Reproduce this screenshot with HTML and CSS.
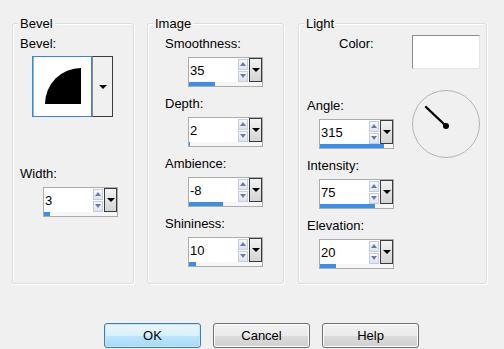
FILE: index.html
```html
<!DOCTYPE html>
<html>
<head>
<meta charset="utf-8">
<link rel="stylesheet" href="styles.css">
</head>
<body>
<div class="dialog">
  <div class="groups">
    <div class="group g-bevel">
      <span class="legend">Bevel</span>
      <div class="label">Bevel:</div>
      <div class="bevel-pick">
        <div class="bevel-preview">
          <svg width="58" height="59" viewBox="0 0 58 59"><path d="M48 47 L12 47 A36 36 0 0 1 48 11 Z" fill="#000"/></svg>
        </div>
        <div class="bevel-drop"><span class="tri"></span></div>
      </div>
      <div class="label width-label">Width:</div>
      <div class="spin">
        <div class="spin-main">
          <div class="spin-field"><span class="val">3</span><span class="arrows"><span class="arrow up"></span><span class="arrow down"></span></span></div>
          <div class="drop"><span class="tri"></span></div>
        </div>
        <div class="bar"><span class="fill" style="width:8%"></span></div>
      </div>
    </div>

    <div class="group g-image">
      <span class="legend">Image</span>
      <div class="param">
        <div class="label">Smoothness:</div>
        <div class="spin">
          <div class="spin-main">
            <div class="spin-field"><span class="val">35</span><span class="arrows"><span class="arrow up"></span><span class="arrow down"></span></span></div>
            <div class="drop"><span class="tri"></span></div>
          </div>
          <div class="bar"><span class="fill" style="width:35%"></span></div>
        </div>
      </div>
      <div class="param">
        <div class="label">Depth:</div>
        <div class="spin">
          <div class="spin-main">
            <div class="spin-field"><span class="val">2</span><span class="arrows"><span class="arrow up"></span><span class="arrow down"></span></span></div>
            <div class="drop"><span class="tri"></span></div>
          </div>
          <div class="bar"><span class="fill" style="width:2%"></span></div>
        </div>
      </div>
      <div class="param">
        <div class="label">Ambience:</div>
        <div class="spin">
          <div class="spin-main">
            <div class="spin-field"><span class="val">-8</span><span class="arrows"><span class="arrow up"></span><span class="arrow down"></span></span></div>
            <div class="drop"><span class="tri"></span></div>
          </div>
          <div class="bar"><span class="fill" style="width:46%"></span></div>
        </div>
      </div>
      <div class="param">
        <div class="label">Shininess:</div>
        <div class="spin">
          <div class="spin-main">
            <div class="spin-field"><span class="val">10</span><span class="arrows"><span class="arrow up"></span><span class="arrow down"></span></span></div>
            <div class="drop"><span class="tri"></span></div>
          </div>
          <div class="bar"><span class="fill" style="width:10%"></span></div>
        </div>
      </div>
    </div>

    <div class="group g-light">
      <span class="legend">Light</span>
      <div class="color-row">
        <div class="label color-label">Color:</div>
        <div class="swatch"></div>
      </div>
      <div class="lower">
        <div class="col">
          <div class="param">
            <div class="label">Angle:</div>
            <div class="spin">
              <div class="spin-main">
                <div class="spin-field"><span class="val">315</span><span class="arrows"><span class="arrow up"></span><span class="arrow down"></span></span></div>
                <div class="drop"><span class="tri"></span></div>
              </div>
              <div class="bar"><span class="fill" style="width:88%"></span></div>
            </div>
          </div>
          <div class="param">
            <div class="label">Intensity:</div>
            <div class="spin">
              <div class="spin-main">
                <div class="spin-field"><span class="val">75</span><span class="arrows"><span class="arrow up"></span><span class="arrow down"></span></span></div>
                <div class="drop"><span class="tri"></span></div>
              </div>
              <div class="bar"><span class="fill" style="width:76%"></span></div>
            </div>
          </div>
          <div class="param">
            <div class="label">Elevation:</div>
            <div class="spin">
              <div class="spin-main">
                <div class="spin-field"><span class="val">20</span><span class="arrows"><span class="arrow up"></span><span class="arrow down"></span></span></div>
                <div class="drop"><span class="tri"></span></div>
              </div>
              <div class="bar"><span class="fill" style="width:22%"></span></div>
            </div>
          </div>
        </div>
        <svg class="dial" width="70" height="70" viewBox="0 0 70 70">
          <circle cx="35" cy="35" r="33.5" fill="none" stroke="#b4b4b4" stroke-width="1"/>
          <line x1="15" y1="18" x2="35" y2="37" stroke="#000" stroke-width="2.4" stroke-linecap="round"/>
          <circle cx="35" cy="37" r="3" fill="#000"/>
        </svg>
      </div>
    </div>
  </div>

  <div class="buttons">
    <button class="btn btn-default">OK</button>
    <button class="btn">Cancel</button>
    <button class="btn">Help</button>
  </div>
</div>
</body>
</html>
```

FILE: styles.css
```css
* { box-sizing: border-box; }

html, body {
  margin: 0;
  padding: 0;
}

body {
  width: 504px;
  height: 349px;
  overflow: hidden;
  background: #f0f0f0;
  color: #000;
  font: 13px/15px "Liberation Sans", Arial, sans-serif;
}

.dialog {
  padding: 23px 0 0 12px;
}

.groups {
  display: flex;
  align-items: flex-start;
}

.group {
  position: relative;
  height: 261px;
  border: 1px solid #d5dfe5;
  border-radius: 3px;
  box-shadow: inset 1px 1px 0 #fff, 1px 1px 0 #fff;
  padding-top: 12px;
}

.legend {
  position: absolute;
  top: -8px;
  left: 5px;
  padding: 0 2px;
  background: #f0f0f0;
}

.g-bevel {
  width: 122px;
  padding-left: 7px;
}

.g-image {
  width: 137px;
  margin-left: 13px;
  padding-left: 17px;
}

.g-light {
  width: 189px;
  margin-left: 14px;
  padding-left: 8px;
}

/* Bevel picker */
.bevel-pick {
  display: flex;
  margin: 5px 0 0 12px;
  height: 61px;
}

.bevel-preview {
  width: 60px;
  height: 61px;
  background: #fff;
  border: 1px solid #3a86d6;
  box-shadow: inset 1px 0 0 #8dbbec;
}

.bevel-preview svg {
  display: block;
}

.bevel-drop {
  width: 21px;
  height: 61px;
  border: 1px solid #3c3c3c;
  border-left-color: #8a8a8a;
  background: #f0f0f0;
  display: flex;
  align-items: center;
  justify-content: center;
}

.width-label {
  margin-top: 49px;
}

.g-bevel .spin {
  margin: 6px 0 0 23px;
}

/* parameters */
.param {
  margin-bottom: 9px;
}

.g-image .param .spin {
  margin: 6px 0 0 23px;
}

.g-light .param .spin {
  margin: 6px 0 0 12px;
}

/* spin control */
.spin {
  width: 75px;
  height: 30px;
  border: 1px solid #acacac;
  background: #f4f4f4;
  display: flex;
  flex-direction: column;
}

.spin-main {
  display: flex;
  height: 24px;
}

.spin-field {
  flex: 1;
  background: #fff;
  display: flex;
  align-items: center;
  padding-left: 1px;
}

.val {
  flex: 1;
  padding-top: 1px;
}

.arrows {
  display: flex;
  flex-direction: column;
  gap: 1px;
  margin-right: 1px;
}

.arrow {
  width: 10px;
  height: 11px;
  border: 1px solid #c3cbdc;
  background: linear-gradient(#f6f8fc, #dde4f0);
  display: flex;
  align-items: center;
  justify-content: center;
}

.arrow::after {
  content: "";
  width: 0;
  height: 0;
  border-left: 3px solid transparent;
  border-right: 3px solid transparent;
}

.arrow.up::after {
  border-bottom: 4px solid #6d7aa6;
}

.arrow.down::after {
  border-top: 4px solid #6d7aa6;
}

.drop {
  width: 13px;
  border: 1px solid #3a3a3a;
  background: linear-gradient(to bottom, #f2f2f2, #d4d4d4);
  display: flex;
  align-items: center;
  justify-content: center;
}

.tri {
  width: 0;
  height: 0;
  border-left: 4px solid transparent;
  border-right: 4px solid transparent;
  border-top: 4px solid #000;
}

.bar {
  flex: 1;
  background: #f6f6f6;
  display: flex;
}

.fill {
  display: block;
  height: 4px;
  background: #3b8fe6;
}

/* Light group */
.color-row {
  display: flex;
  align-items: flex-start;
}

.color-label {
  margin-left: 32px;
  width: 73px;
}

.swatch {
  width: 68px;
  height: 34px;
  margin-top: -1px;
  background: #fff;
  border-top: 1px solid #8c8c8c;
  border-left: 1px solid #8c8c8c;
  border-right: 1px solid #e4e4e4;
  border-bottom: 1px solid #e4e4e4;
}

.lower {
  display: flex;
  align-items: flex-start;
  margin-top: 29px;
}

.col {
  width: 87px;
}

.dial {
  display: block;
  margin: -9px 0 0 17px;
}

/* buttons */
.buttons {
  display: flex;
  gap: 12px;
  margin: 39px 0 0 92px;
}

.btn {
  width: 97px;
  height: 25px;
  padding: 0;
  border: 1px solid #707070;
  border-radius: 3px;
  background: linear-gradient(#f2f2f2 0%, #ebebeb 50%, #dddddd 50%, #cfcfcf 100%);
  box-shadow: inset 0 0 0 1px #fcfcfc;
  font: 13px/15px "Liberation Sans", Arial, sans-serif;
  color: #000;
}

.btn-default {
  border-color: #3c7fb1;
  background: linear-gradient(#eaf6fd 0%, #d9f0fc 50%, #bee6fd 50%, #a7d9f5 100%);
  box-shadow: inset 0 0 0 1px #c4e5f6;
}
```
